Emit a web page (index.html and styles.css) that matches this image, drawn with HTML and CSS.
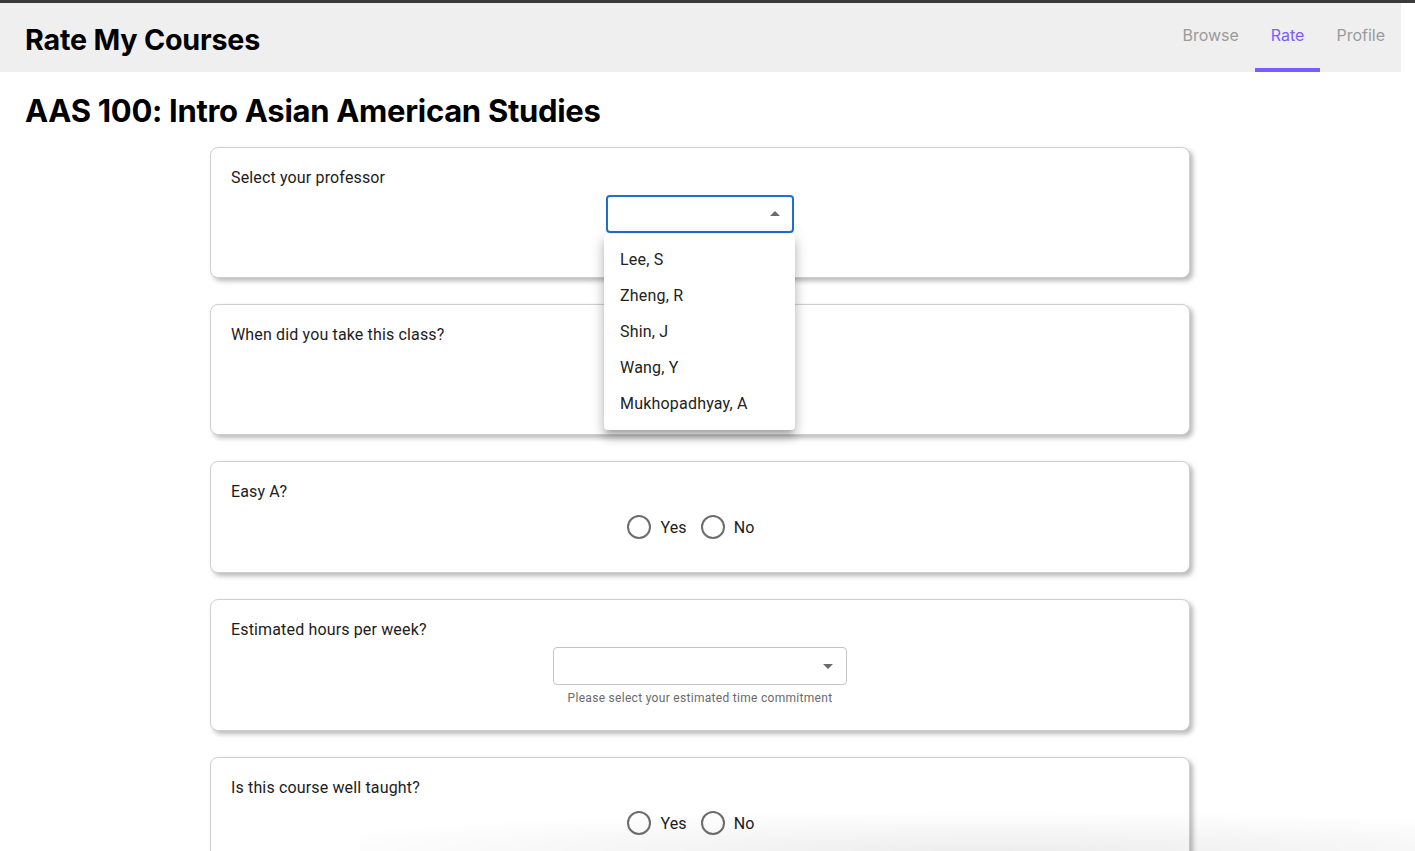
FILE: index.html
```html
<!DOCTYPE html>
<html lang="en">
<head>
<meta charset="utf-8">
<title>Rate My Courses</title>
<link rel="stylesheet" href="styles.css">
</head>
<body>
<div class="topline"></div>
<div class="page">
  <header class="appbar">
    <div class="brand">Rate My Courses</div>
    <nav class="tabs">
      <a class="tab">Browse</a>
      <a class="tab active">Rate</a>
      <a class="tab">Profile</a>
    </nav>
  </header>

  <h1 class="course-title">AAS 100: Intro Asian American Studies</h1>

  <div class="content">
    <main class="cards">
      <section class="card">
        <div class="q">Select your professor</div>
        <div class="field">
          <div class="select-wrap">
            <div class="select small focused"><span class="caret up"></span></div>
            <ul class="menu">
              <li>Lee, S</li>
              <li>Zheng, R</li>
              <li>Shin, J</li>
              <li>Wang, Y</li>
              <li>Mukhopadhyay, A</li>
            </ul>
          </div>
          <div class="helper-space"></div>
        </div>
      </section>

      <section class="card">
        <div class="q">When did you take this class?</div>
        <div class="field">
          <div class="select small"><span class="caret"></span></div>
          <div class="helper-space"></div>
        </div>
      </section>

      <section class="card">
        <div class="q">Easy A?</div>
        <div class="radios">
          <label class="opt"><span class="radio"></span><span>Yes</span></label>
          <label class="opt"><span class="radio"></span><span>No</span></label>
        </div>
      </section>

      <section class="card">
        <div class="q">Estimated hours per week?</div>
        <div class="field">
          <div class="select wide"><span class="caret"></span></div>
          <div class="helper">Please select your estimated time commitment</div>
        </div>
      </section>

      <section class="card">
        <div class="q">Is this course well taught?</div>
        <div class="radios">
          <label class="opt"><span class="radio"></span><span>Yes</span></label>
          <label class="opt"><span class="radio"></span><span>No</span></label>
        </div>
      </section>
    </main>
  </div>
</div>
<div class="dock-shadow"></div>
</body>
</html>
```

FILE: styles.css
```css
* { box-sizing: border-box; }

html, body {
  margin: 0;
  padding: 0;
  background: #ffffff;
  overflow: hidden;
}

body {
  font-family: Roboto, "Liberation Sans", sans-serif;
  color: #1c1c1c;
}

.topline {
  height: 3px;
  background: #3a3a3a;
}

.page {
  width: 1401px;
}

.appbar {
  display: flex;
  justify-content: space-between;
  align-items: stretch;
  height: 69px;
  background: #efefef;
}

.brand {
  font-family: Inter, "Liberation Sans", sans-serif;
  font-weight: 700;
  font-size: 28.7px;
  letter-spacing: -0.2px;
  color: #000;
  padding-left: 25px;
  align-self: center;
  margin-top: 4px;
}

.tabs {
  display: flex;
}

.tab {
  font-family: Inter, "Liberation Sans", sans-serif;
  font-size: 16px;
  line-height: 22px;
  color: #9a9a9a;
  padding: 21px 16px 0;
  border-bottom: 4px solid transparent;
  cursor: pointer;
}

.tab.active {
  color: #7b5cff;
  border-bottom-color: #7b5cff;
}

.course-title {
  font-family: Inter, "Liberation Sans", sans-serif;
  font-weight: 700;
  font-size: 31px;
  line-height: 40px;
  letter-spacing: -0.3px;
  color: #000;
  margin: 19px 0 16px 25px;
}

.content {
  padding-right: 1px;
}

.cards {
  width: 980px;
  margin: 0 auto;
  display: flex;
  flex-direction: column;
  gap: 26px;
}

.card {
  background: #fff;
  border: 1px solid #cfcfcf;
  border-radius: 8px;
  box-shadow: 3px 3px 5px rgba(0, 0, 0, 0.28);
  padding: 20px 20px 24px;
}

.q {
  font-size: 16px;
  line-height: 19px;
  letter-spacing: 0.15px;
  color: #1c1c1c;
}

.field {
  display: flex;
  flex-direction: column;
  align-items: center;
  margin-top: 8px;
}

.select-wrap {
  position: relative;
}

.select {
  position: relative;
  height: 38px;
  border: 1px solid #c4c4c4;
  border-radius: 4px;
  background: #fff;
}

.select.small { width: 188px; }
.select.wide { width: 294px; }

.select.focused {
  border: 2px solid #1f6fcf;
}

.caret {
  position: absolute;
  right: 13px;
  top: 16px;
  width: 0;
  height: 0;
  border-left: 5px solid transparent;
  border-right: 5px solid transparent;
  border-top: 5px solid #6a6a6a;
}

.caret.up {
  top: 14px;
  right: 12px;
  border-top: none;
  border-bottom: 5px solid #6a6a6a;
}

.menu {
  position: absolute;
  left: -2px;
  top: 39px;
  width: 191px;
  margin: 0;
  padding: 8px 0;
  list-style: none;
  background: #fff;
  border-radius: 4px;
  box-shadow: 0 5px 5px -3px rgba(0,0,0,0.2), 0 8px 10px 1px rgba(0,0,0,0.14), 0 3px 14px 2px rgba(0,0,0,0.12);
  z-index: 5;
}

.menu li {
  height: 36px;
  line-height: 36px;
  padding: 0 16px;
  font-size: 16px;
  letter-spacing: 0.2px;
  color: #222;
}

.helper-space {
  height: 20px;
}

.helper {
  margin-top: 5px;
  font-size: 12px;
  line-height: 16px;
  letter-spacing: 0.3px;
  color: #6a6a6a;
}

.radios {
  display: flex;
  justify-content: center;
  margin-top: 5px;
}

.opt {
  display: inline-flex;
  align-items: center;
  margin-left: -11px;
  margin-right: 16px;
  font-size: 16px;
  letter-spacing: 0.15px;
  color: #1c1c1c;
}

.radio {
  width: 42px;
  height: 42px;
  display: flex;
  align-items: center;
  justify-content: center;
}

.radio::before {
  content: "";
  width: 20px;
  height: 20px;
  border: 2px solid #6e6e6e;
  border-radius: 50%;
}

.dock-shadow {
  position: fixed;
  left: 360px;
  right: 0;
  bottom: 0;
  height: 40px;
  background: radial-gradient(ellipse 70% 100% at 60% 100%, rgba(0,0,0,0.07), rgba(0,0,0,0) 100%);
  pointer-events: none;
}
```
